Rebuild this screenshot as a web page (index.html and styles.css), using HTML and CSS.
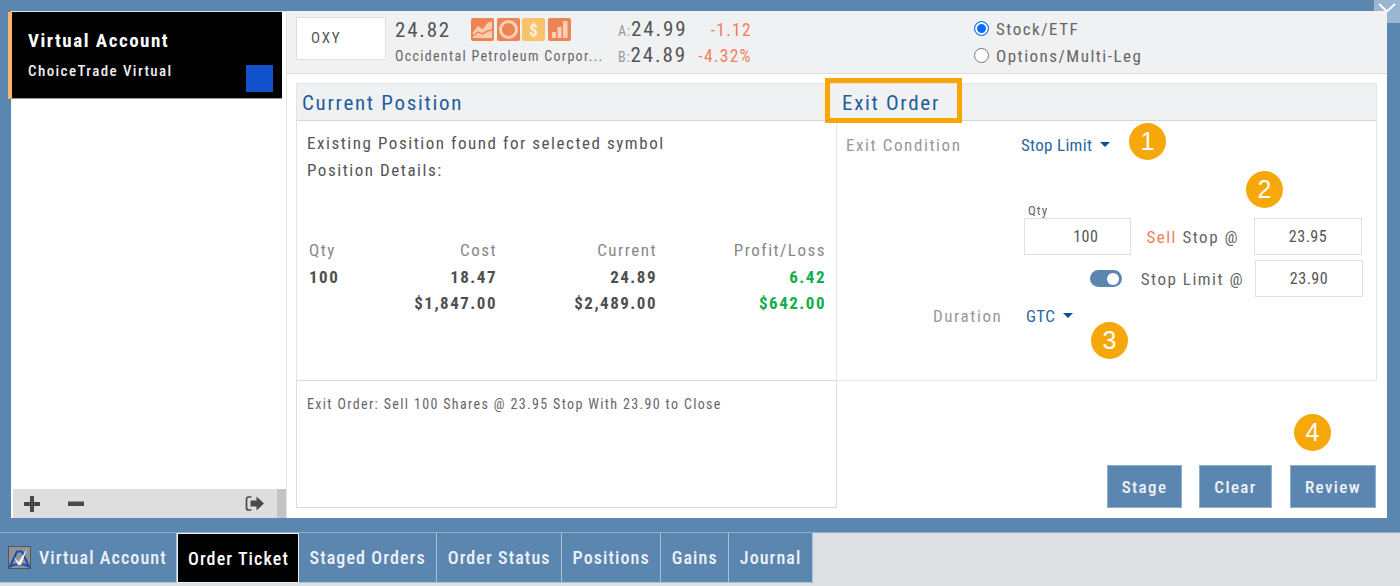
FILE: index.html
```html
<!DOCTYPE html>
<html lang="en">
<head>
<meta charset="utf-8">
<title>Order Ticket</title>
<link rel="stylesheet" href="styles.css">
</head>
<body>
<div class="stage">
  <button class="collapse" aria-label="Collapse"><svg width="18" height="10" viewBox="0 0 18 10"><path d="M1 1l8 7.500 8-7.500" fill="none" stroke="#fff" stroke-width="2"/></svg></button>
  <aside class="sidebar">
    <div class="accounts">
      <div class="account">
        <div class="account-name">Virtual Account</div>
        <div class="account-sub">ChoiceTrade Virtual</div>
        <span class="swatch"></span>
      </div>
    </div>
    <div class="side-foot">
      <svg class="ic-plus" width="18" height="18" viewBox="0 0 18 18"><path d="M7 1h4v6h6v4h-6v6H7v-6H1V7h6z" fill="#4a4a4a"/></svg>
      <svg class="ic-minus" width="18" height="18" viewBox="0 0 18 18"><path d="M1 6.500h16v4.500H1z" fill="#4a4a4a"/></svg>
      <svg class="ic-exit" width="20" height="17" viewBox="0 0 20 17"><path d="M6.500 2H3.500Q1.500 2 1.500 4v9Q1.500 15 3.500 15H6.500" fill="none" stroke="#4a4a4a" stroke-width="1.700"/><path d="M5.500 5.500h6V1.500L19 8.500 11.500 15.500v-4h-6z" fill="#4a4a4a"/></svg>
      <span class="side-scroll"></span>
    </div>
  </aside>
  <main class="panel">
    <header class="quote">
      <div class="symbol">OXY</div>
      <div class="quote-main">
        <div class="last-row">
          <span class="last">24.82</span>
          <span class="badges">
            <span class="qb"><svg width="23" height="23" viewBox="0 0 23 23"><path d="M2 14l5-6 4.500 3.500L16.500 5l4.500-2v17H2z" fill="#f9cdb2"/><path d="M2 18l5-4 4.500 2 5-3 4.500-1" fill="none" stroke="#ee8353" stroke-width="1.500"/></svg></span>
            <span class="qb"><svg width="23" height="23" viewBox="0 0 23 23"><circle cx="11.500" cy="11.500" r="8" fill="none" stroke="#f9d0b8" stroke-width="3"/></svg></span>
            <span class="qb qb-amber">$</span>
            <span class="qb"><svg width="23" height="23" viewBox="0 0 23 23"><path d="M4 14h4v6H4zM9.500 9h4v11h-4zM15 3h4.500v17H15z" fill="#f9d0b8"/></svg></span>
          </span>
        </div>
        <div class="company">Occidental Petroleum Corpor...</div>
      </div>
      <div class="bidask">
        <div class="ba-row"><span class="ba-key">A:</span>24.99</div>
        <div class="ba-row"><span class="ba-key">B:</span>24.89</div>
      </div>
      <div class="change">
        <div>-1.12</div>
        <div>-4.32%</div>
      </div>
      <div class="asset-type">
        <label class="radio"><span class="dot on"></span>Stock/ETF</label>
        <label class="radio"><span class="dot"></span>Options/Multi-Leg</label>
      </div>
    </header>

    <section class="work">
      <div class="heads">
        <h2 class="head head-left">Current Position</h2>
        <h2 class="head head-right">Exit Order</h2>
      </div>
      <div class="columns">
        <div class="col-pos">
          <p class="found">Existing Position found for selected symbol</p>
          <p class="details">Position Details:</p>
          <div class="pos-table">
            <span class="th left">Qty</span><span class="th">Cost</span><span class="th">Current</span><span class="th">Profit/Loss</span>
            <span class="td left">100</span><span class="td">18.47</span><span class="td">24.89</span><span class="td gain">6.42</span>
            <span class="td left"></span><span class="td">$1,847.00</span><span class="td">$2,489.00</span><span class="td gain">$642.00</span>
          </div>
        </div>
        <div class="col-exit">
          <div class="cond-row">
            <span class="muted cond-label">Exit Condition</span>
            <span class="drop">Stop Limit<i class="caret"></i></span>
          </div>
          <div class="qty-label">Qty</div>
          <div class="price-row">
            <span class="box box-qty">100</span>
            <span class="plabel"><span class="sell">Sell</span> Stop @</span>
            <span class="box">23.95</span>
          </div>
          <div class="limit-row">
            <span class="toggle"></span>
            <span class="plabel">Stop Limit @</span>
            <span class="box">23.90</span>
          </div>
          <div class="dur-row">
            <span class="muted dur-label">Duration</span>
            <span class="drop">GTC<i class="caret"></i></span>
          </div>
        </div>
      </div>
      <div class="lower">
        <div class="summary">Exit Order: Sell 100 Shares @ 23.95 Stop With 23.90 to Close</div>
        <div class="actions">
          <button class="btn btn-stage">Stage</button>
          <button class="btn btn-clear">Clear</button>
          <button class="btn btn-review">Review</button>
        </div>
      </div>
    </section>
    <span class="highlight"></span>
    <span class="num n1">1</span>
    <span class="num n2">2</span>
    <span class="num n3">3</span>
    <span class="num n4">4</span>
  </main>
</div>
<nav class="tabbar">
  <div class="tabs">
    <a class="tab tab-first"><svg class="logo" width="23" height="23" viewBox="0 0 23 23"><rect x=".5" y=".5" width="22" height="22" fill="#8f9499" stroke="#555"/><path d="M2 20.500L9 5.500h5l7 15-5-2H7z" fill="none" stroke="#1d50a8" stroke-width="2.200"/><path d="M6 11l4.500 5L19 3l-6 16h-3z" fill="#f4f6f8"/></svg>Virtual Account</a>
    <a class="tab active">Order Ticket</a>
    <a class="tab">Staged Orders</a>
    <a class="tab">Order Status</a>
    <a class="tab">Positions</a>
    <a class="tab">Gains</a>
    <a class="tab">Journal</a>
  </div>
</nav>
</body>
</html>
```

FILE: styles.css
```css
* { box-sizing: border-box; }
html, body { margin: 0; padding: 0; }
body {
  width: 1400px; height: 586px; overflow: hidden;
  background: #5b86b0;
  font-family: Roboto, "Liberation Sans", sans-serif;
  font-stretch: condensed;
  color: #555;
  display: flex; flex-direction: column;
}
.stage {
  position: relative;
  height: 533px;
  padding: 11px 13px 14px 11px;
  display: flex;
  border-bottom: 1px solid #8fb0cc;
}
.collapse {
  position: absolute; top: 0; right: 0;
  width: 26px; height: 23px;
  background: #9ab6d0; border: 0; padding: 3px 0 0;
  display: flex; align-items: flex-start; justify-content: center;
}
.sidebar {
  width: 276px; background: #fff;
  display: flex; flex-direction: column;
  border-top: 1px solid #dfe4ea;
  border-right: 1px solid #dfe2e6;
}
.accounts { flex: 1; }
.account {
  position: relative; left: -3px;
  width: 274px; height: 87px;
  background: #000;
  border-left: 4px solid #f7b766;
  border-bottom: 1px solid #999;
  padding: 18px 0 0 16px;
}
.account-name { font-size: 19px; font-weight: 700; color: #fff; letter-spacing: 1.5px; line-height: 22px; }
.account-sub { font-size: 15px; font-weight: 500; color: #eee; letter-spacing: 1.4px; line-height: 18px; margin-top: 10px; }
.swatch { position: absolute; right: 9px; bottom: 6px; width: 27px; height: 27px; background: #1152cc; }
.side-foot {
  height: 29px; background: #dedede; margin-left: 2px;
  display: flex; align-items: center;
}
.ic-plus { margin-left: 10px; }
.ic-minus { margin-left: 26px; }
.ic-exit { margin-left: auto; margin-right: 12px; }
.side-scroll { width: 9px; align-self: stretch; background: #c4c4c4; }

.panel { position: relative; flex: 1; background: #fff; display: flex; flex-direction: column; }
.quote {
  height: 63px; background: #f0f1f3; border-bottom: 1px solid #dcdee1;
  display: flex; padding: 6px 0 0 9px;
}
.symbol {
  width: 90px; height: 43px; background: #fff; border: 1px solid #dcdee1;
  font-size: 15px; letter-spacing: 1.8px; line-height: 41px; padding-left: 14px; color: #555;
}
.quote-main { margin-left: 9px; width: 210px; }
.last-row { display: flex; align-items: center; height: 25px; }
.last { font-size: 21px; letter-spacing: 1.8px; color: #555; width: 76px; }
.badges { display: flex; gap: 2.500px; }
.qb {
  width: 23px; height: 23px; border-radius: 2px; background: #ee8353;
  display: flex; align-items: center; justify-content: center; overflow: hidden;
}
.qb-amber { background: #fbc26e; color: #fff2dc; font-size: 17px; font-weight: 700; }
.company { font-size: 14px; letter-spacing: 1.3px; line-height: 18px; margin-top: 5px; white-space: nowrap; color: #666; }
.bidask { margin-left: 13px; width: 78px; margin-top: -1px; }
.ba-row { height: 26px; line-height: 26px; font-size: 21px; letter-spacing: 1.9px; color: #555; white-space: nowrap; }
.ba-key { font-size: 14px; color: #999; letter-spacing: .8px; }
.change { width: 56px; font-size: 17.500px; letter-spacing: 1.3px; color: #f0805a; line-height: 26px; text-align: right; white-space: nowrap; }
.asset-type { margin-left: auto; width: 413px; font-size: 17px; letter-spacing: 1.500px; color: #666; margin-top: -2px; }
.radio { display: flex; align-items: center; height: 27px; }
.dot { width: 15px; height: 15px; border-radius: 50%; border: 1.500px solid #777; background: #fff; margin-right: 7px; }
.dot.on { border-color: #1a73e8; background: #0a6cf0; box-shadow: inset 0 0 0 2px #fff; }

.work { flex: 1; padding: 9px 10px 10px 9px; display: flex; flex-direction: column; }
.heads { display: flex; height: 38px; background: #f0f1f3; border: 1px solid #e4e5e8; border-bottom: 1px solid #d5d6d9; }
.head { margin: 0; font-size: 21px; font-weight: 400; letter-spacing: 1.7px; color: #1f5d9c; line-height: 38px; }
.head-left { width: 539px; padding-left: 5px; }
.head-right { padding-left: 6px; }
.columns { display: flex; height: 259px; }
.col-pos { width: 541px; border-left: 1px solid #e4e5e8; border-right: 1px solid #e4e5e8; padding: 9px 10px 0 10px; }
.found, .details { margin: 0; font-size: 17px; letter-spacing: 1.550px; line-height: 27px; color: #555; white-space: nowrap; }
.pos-table { display: grid; grid-template-columns: 60px 130px 160px 169px; grid-auto-rows: 26.500px; margin-top: 53px; }
.th, .td { text-align: right; font-size: 17px; letter-spacing: 1.5px; line-height: 26.500px; }
.th { color: #888; }
.td { font-weight: 700; color: #4f4f4f; }
.left { text-align: left; padding-left: 2px; }
.gain { color: #0fae4a; }
.col-exit { flex: 1; border-right: 1px solid #e4e5e8; padding-left: 9px; }
.muted { font-size: 17px; letter-spacing: 1.600px; color: #999; white-space: nowrap; }
.cond-label { width: 175px; }
.dur-label { width: 93px; }
.drop { font-size: 17px; color: #28679f; letter-spacing: .3px; display: inline-flex; align-items: center; white-space: nowrap; }
.caret { width: 0; height: 0; margin-left: 8px; border: 5.500px solid transparent; border-top: 5px solid #0d4f96; border-bottom: 0; margin-top: -2px; }
.cond-row { display: flex; align-items: center; height: 22px; margin-top: 13px; }
.qty-label { font-size: 13px; letter-spacing: 1px; margin: 48px 0 0 182px; line-height: 14px; color: #666; }
.price-row, .limit-row { display: flex; align-items: center; justify-content: flex-end; }
.price-row { padding-right: 14px; }
.limit-row { margin-top: 5px; padding-right: 13px; }
.box {
  width: 108px; height: 37px; background: #fff; border: 1px solid #dce1e6;
  font-size: 16px; letter-spacing: .5px; color: #555; text-align: center; line-height: 35px;
}
.box-qty { margin-right: 15px; text-align: right; padding-right: 32px; width: 107px; }
.plabel { font-size: 17px; letter-spacing: 1.5px; color: #666; white-space: nowrap; }
.price-row .plabel { margin-right: 15px; }
.limit-row .plabel { margin-right: 11px; }
.sell { color: #f0805a; }
.toggle { width: 32px; height: 17px; border-radius: 9px; background: #5b86b0; position: relative; margin-right: 19px; }
.toggle::after { content: ""; position: absolute; right: 3px; top: 2.500px; width: 12px; height: 12px; border-radius: 50%; background: #fff; }
.dur-row { display: flex; align-items: center; height: 22px; margin: 8px 0 0 87px; }
.lower { flex: 1; display: flex; }
.summary { width: 541px; border: 1px solid #dcdcdc; font-size: 14px; letter-spacing: 1.350px; color: #666; padding: 15px 10px 0; white-space: nowrap; }
.actions { flex: 1; display: flex; justify-content: flex-end; align-items: flex-end; padding-right: 1px; gap: 17px; border-top: 1px solid #e4e5e8; }
.btn { height: 43px; background: #5b86b0; border: 1px solid #8fb0cc; color: #eef2f7; font: inherit; font-size: 17px; font-weight: 500; letter-spacing: 1.4px; }
.btn-stage { width: 75px; }
.btn-clear { width: 73px; }
.btn-review { width: 86px; margin-left: 1px; }

.highlight { position: absolute; left: 538px; top: 67px; width: 137px; height: 45px; border: 5px solid #f9a602; }
.num {
  position: absolute; width: 37px; height: 37px; border-radius: 50%;
  background: #f6a80b; color: #fff; font-family: "Liberation Sans", sans-serif;
  font-size: 25px; line-height: 37px; text-align: center;
}
.n1 { left: 842px; top: 112px; }
.n2 { left: 959px; top: 160px; }
.n3 { left: 804px; top: 311px; }
.n4 { left: 1007px; top: 403px; }

.tabbar { flex: 1; background: #dde0e2; }
.tabs { display: flex; height: 50px; }
.tab {
  height: 100%; background: #5b86b0; color: #eef2f7;
  border-right: 1px solid #a9c2d8; border-bottom: 1px solid #a9c2d8;
  font-size: 18px; font-weight: 500; letter-spacing: 1.1px;
  display: flex; align-items: center; padding: 0 10.500px;
  white-space: nowrap;
}
.tab-first { width: 177px; padding-left: 8px; }
.logo { margin-right: 8px; flex: none; }
.active { background: #000; color: #fff; width: 122px; border: 1px solid #eef2f7; padding: 0 10px; }
```
